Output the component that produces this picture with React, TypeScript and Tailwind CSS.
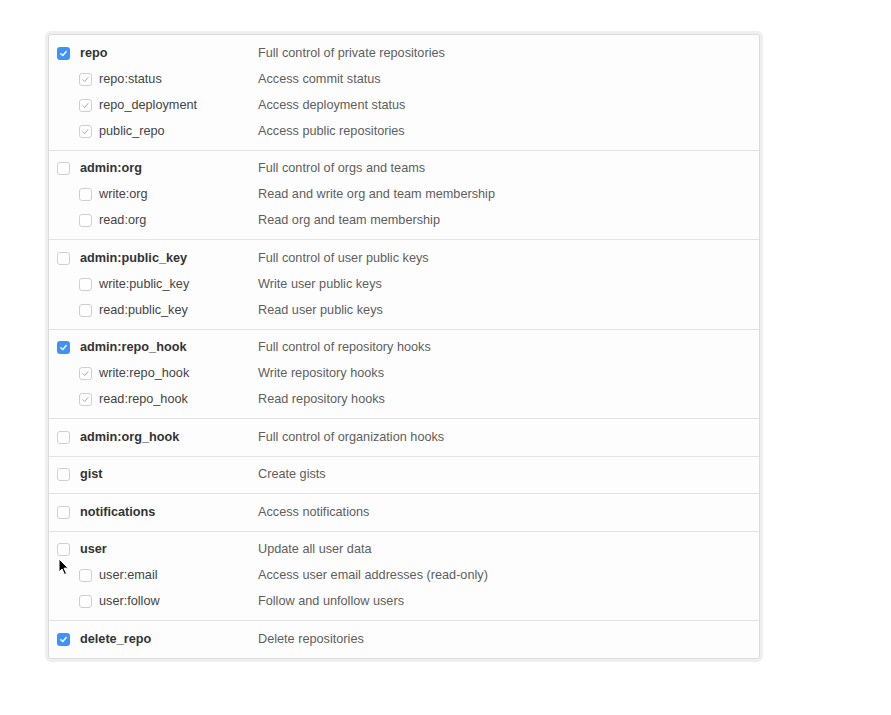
import React from 'react';

type Scope = { name: string; desc: string; checked: boolean; children?: { name: string; desc: string }[] };

const scopes: Scope[] = [
  {
    name: 'repo', desc: 'Full control of private repositories', checked: true,
    children: [
      { name: 'repo:status', desc: 'Access commit status' },
      { name: 'repo_deployment', desc: 'Access deployment status' },
      { name: 'public_repo', desc: 'Access public repositories' },
    ],
  },
  {
    name: 'admin:org', desc: 'Full control of orgs and teams', checked: false,
    children: [
      { name: 'write:org', desc: 'Read and write org and team membership' },
      { name: 'read:org', desc: 'Read org and team membership' },
    ],
  },
  {
    name: 'admin:public_key', desc: 'Full control of user public keys', checked: false,
    children: [
      { name: 'write:public_key', desc: 'Write user public keys' },
      { name: 'read:public_key', desc: 'Read user public keys' },
    ],
  },
  {
    name: 'admin:repo_hook', desc: 'Full control of repository hooks', checked: true,
    children: [
      { name: 'write:repo_hook', desc: 'Write repository hooks' },
      { name: 'read:repo_hook', desc: 'Read repository hooks' },
    ],
  },
  { name: 'admin:org_hook', desc: 'Full control of organization hooks', checked: false },
  { name: 'gist', desc: 'Create gists', checked: false },
  { name: 'notifications', desc: 'Access notifications', checked: false },
  {
    name: 'user', desc: 'Update all user data', checked: false,
    children: [
      { name: 'user:email', desc: 'Access user email addresses (read-only)' },
      { name: 'user:follow', desc: 'Follow and unfollow users' },
    ],
  },
  { name: 'delete_repo', desc: 'Delete repositories', checked: true },
];

const Box = ({ state }: { state: 'on' | 'off' | 'implied' }) => {
  if (state === 'on') {
    return (
      <span className="w-[13px] h-[13px] rounded-[3px] bg-[#3f92f8] flex items-center justify-center shrink-0">
        <svg width="9" height="9" viewBox="0 0 10 10">
          <path d="M2 5.2 L4.2 7.3 L8 2.8" fill="none" stroke="#fff" strokeWidth="1.6" strokeLinecap="round" strokeLinejoin="round" />
        </svg>
      </span>
    );
  }
  return (
    <span className="w-[13px] h-[13px] rounded-[3px] bg-white border border-[#cfcfcf] flex items-center justify-center shrink-0">
      {state === 'implied' && (
        <svg width="9" height="9" viewBox="0 0 10 10">
          <path d="M2.2 5.2 L4.2 7.2 L7.8 2.8" fill="none" stroke="#a8a8a8" strokeWidth="1.1" strokeLinecap="round" strokeLinejoin="round" />
        </svg>
      )}
    </span>
  );
};

export default function App() {
  return (
    <div className="min-h-[715px] bg-white pt-[34px] pl-[48px]" style={{ fontFamily: '"Liberation Sans", Arial, sans-serif' }}>
      <div className="relative w-[712px] border border-[#dcdcdc] rounded-[3px] bg-[#fdfdfd] shadow-[0_0_0_3px_#efefef] text-[12.7px]">
        {scopes.map((s, i) => (
          <div key={s.name} className={`py-[5.25px] ${i > 0 ? 'border-t border-[#e3e3e3]' : ''}`}>
            <div className="h-[26px] flex items-center">
              <div className="w-[209px] pl-[8px] flex items-center gap-[10px]">
                <Box state={s.checked ? 'on' : 'off'} />
                <span className="font-bold text-[#333]">{s.name}</span>
              </div>
              <span className="text-[#5e5e5e]">{s.desc}</span>
            </div>
            {s.children?.map((c) => (
              <div key={c.name} className="h-[26px] flex items-center">
                <div className="w-[209px] pl-[30px] flex items-center gap-[7px]">
                  <Box state={s.checked ? 'implied' : 'off'} />
                  <span className="text-[#444]">{c.name}</span>
                </div>
                <span className="text-[#5e5e5e]">{c.desc}</span>
              </div>
            ))}
          </div>
        ))}
        {/* mouse pointer */}
        <svg className="absolute left-[9px] top-[523px]" width="12" height="18" viewBox="0 0 12 18">
          <path d="M1 1 L1 14 L4 11 L6.5 16.5 L8.5 15.5 L6 10.2 L10.2 10.2 Z" fill="#000" stroke="#fff" strokeWidth="1" strokeLinejoin="round" />
        </svg>
      </div>
    </div>
  );
}
